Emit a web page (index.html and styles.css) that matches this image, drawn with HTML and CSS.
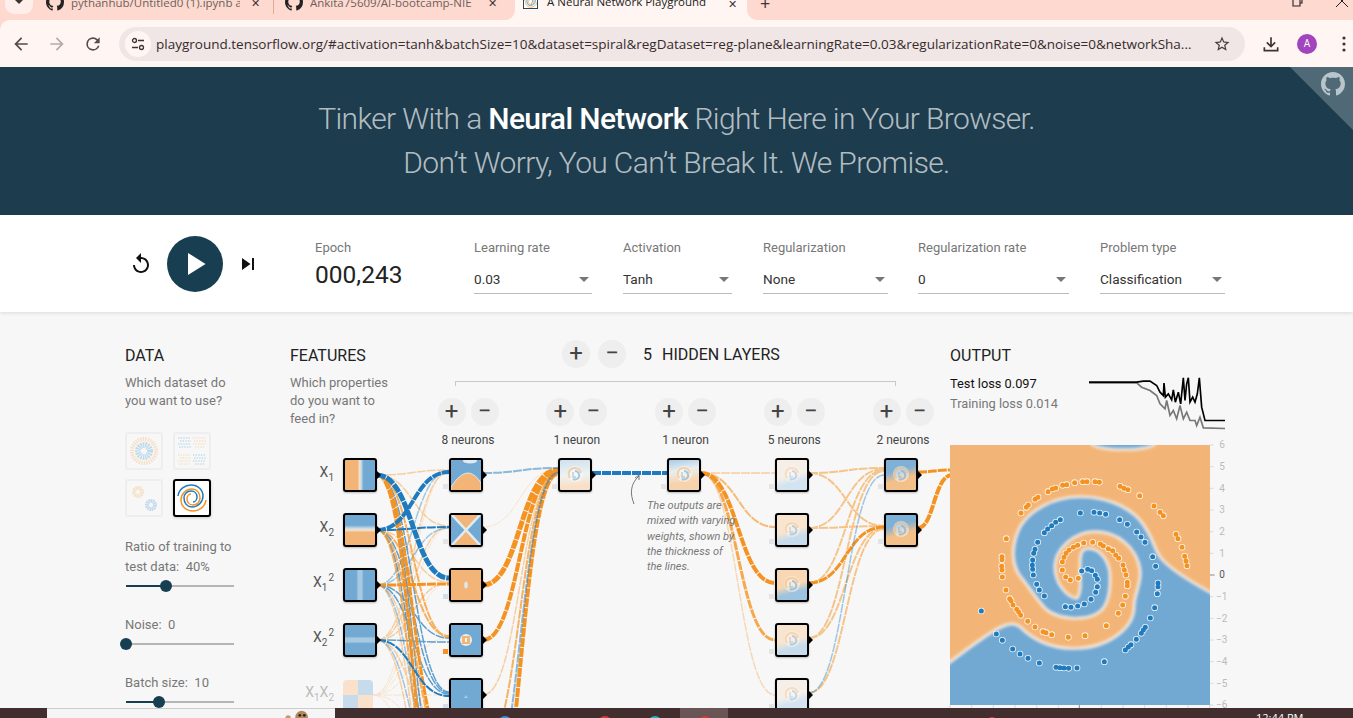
FILE: index.html
```html
<!DOCTYPE html>
<html lang="en">
<head>
<meta charset="utf-8">
<title>A Neural Network Playground</title>
<link rel="stylesheet" href="styles.css">
</head>
<body>
<svg class="defs" width="0" height="0" aria-hidden="true">
  <defs>
    <filter id="soft" x="-5%" y="-5%" width="110%" height="110%"><feGaussianBlur stdDeviation="4"/></filter>
    <symbol id="gh" viewBox="0 0 16 16"><path d="M8 0C3.58 0 0 3.58 0 8c0 3.54 2.29 6.53 5.47 7.59.4.07.55-.17.55-.38 0-.19-.01-.82-.01-1.49-2.01.37-2.53-.49-2.69-.94-.09-.23-.48-.94-.82-1.13-.28-.15-.68-.52-.01-.53.63-.01 1.08.58 1.23.82.72 1.21 1.87.87 2.33.66.07-.52.28-.87.51-1.07-1.78-.2-3.64-.89-3.64-3.95 0-.87.31-1.59.82-2.15-.08-.2-.36-1.02.08-2.12 0 0 .67-.21 2.2.82.64-.18 1.32-.27 2-.27s1.36.09 2 .27c1.53-1.04 2.2-.82 2.2-.82.44 1.1.16 1.92.08 2.12.51.56.82 1.27.82 2.15 0 3.07-1.87 3.75-3.65 3.95.29.25.54.73.54 1.48 0 1.07-.01 1.93-.01 2.2 0 .21.15.46.55.38A8.013 8.013 0 0016 8c0-4.42-3.58-8-8-8z"/></symbol>
    <symbol id="swirl" viewBox="0 0 30 30">
      <circle cx="15" cy="14" r="8" fill="#fff" opacity=".45"/>
      <path d="M10 18c-3-4-1-10 5-10 3 0 6 2 6 5" fill="none" stroke="#f3b577" stroke-width="2" opacity=".6"/>
      <path d="M15 11c3 0 5 3 4 6-1 2-4 3-6 2" fill="none" stroke="#72a9d2" stroke-width="2" opacity=".6"/>
      <path d="M13 12v5h3" fill="none" stroke="#72a9d2" stroke-width="1.4" opacity=".5"/>
    </symbol>
    <symbol id="spiral" viewBox="0 0 34 34">
      <path d="M31 19C30 26 24 30 18 30C11 30 6 25 6 19C6 13 11 8 17 8C22 8 25 12 25 17C25 21 22 24 18 24C14 24 12 21 12 18C12 15 14 13 16 13" fill="none" stroke="#f59322" stroke-width="1.5"/>
      <path d="M31 19C30 26 24 30 18 30C11 30 6 25 6 19C6 13 11 8 17 8C22 8 25 12 25 17C25 21 22 24 18 24C14 24 12 21 12 18C12 15 14 13 16 13" fill="none" stroke="#1f7bbf" stroke-width="1.5" transform="rotate(180 17 17)"/>
    </symbol>
    <symbol id="heat" viewBox="30 315 780 780">
      <rect x="30" y="315" width="780" height="780" fill="#f3b577"/>
      <g filter="url(#soft)">
        <ellipse cx="550" cy="310" rx="95" ry="19" fill="#72a9d2" stroke="#f8f2ea" stroke-width="7"/>
        <path fill="#72a9d2" stroke="#f8f2ea" stroke-width="7" d="M830 767C760 730 690 690 660 650C640 620 640 590 600 540C560 495 490 470 420 470C340 470 270 510 240 560C210 620 215 680 245 715C270 745 290 780 320 810C360 840 440 845 480 815C510 790 512 740 510 700C505 660 480 625 445 625C420 625 420 650 420 680C420 720 425 760 410 775C380 770 345 730 345 680C345 630 400 575 465 575C530 575 590 620 600 690C605 730 580 770 582 800C582 860 510 925 400 925C320 925 270 890 240 860C225 848 205 850 185 860C140 880 80 930 10 980L10 1115L830 1115Z"/>
      </g>
    </symbol>
    <path id="po" d="M243 519h0M259 502h0M265 495h0M285 478h0M294 472h0M324 455h0M337 447h0M347 444h0M368 436h0M380 434h0M404 428h0M428 425h0M441 425h0M465 425h0M478 427h0M540 439h0M552 445h0M564 449h0M599 467h0M642 498h0M660 517h0M670 527h0M708 583h0M714 596h0M726 622h0M734 649h0M738 663h0M741 677h0M199 596h0M186 650h0M186 659h0M185 679h0M186 690h0M187 711h0M198 750h0M209 776h0M213 782h0M219 795h0M230 808h0M236 816h0M242 826h0M263 844h0M285 861h0M309 875h0M318 878h0M335 884h0M385 892h0M435 887h0M499 857h0M535 820h0M548 795h0M556 769h0M562 737h0M562 727h0M558 705h0M553 690h0M549 675h0M536 655h0M527 645h0M518 632h0M505 626h0M490 618h0M481 612h0M458 607h0M431 609h0M413 616h0M400 622h0M387 630h0M378 640h0M372 652h0M367 666h0M367 690h0M377 711h0M391 720h0M415 715h0"/>
    <path id="pb" d="M421 519h0M462 517h0M479 519h0M497 523h0M539 539h0M562 553h0M590 576h0M603 591h0M615 607h0M638 650h0M647 679h0M654 729h0M654 740h0M652 761h0M644 803h0M631 834h0M616 862h0M610 870h0M604 880h0M589 898h0M573 914h0M565 921h0M556 930h0M493 965h0M411 984h0M386 985h0M372 984h0M360 983h0M348 982h0M298 969h0M264 955h0M240 942h0M218 927h0M187 901h0M169 882h0M124 813h0M361 539h0M347 547h0M335 557h0M323 567h0M313 578h0M293 607h0M285 628h0M281 640h0M278 660h0M277 675h0M278 688h0M280 705h0M290 733h0M298 750h0M313 768h0M425 693h0M443 688h0M455 692h0M466 706h0M472 718h0M472 740h0M467 757h0M453 778h0M433 792h0M413 798h0M393 802h0M376 800h0"/>
  </defs>
</svg>

<div class="tabstrip">
  <div class="tabs-left">
    <span class="tab-search"><svg class="chev" viewBox="0 0 10 6"><path d="M1 0l4 4 4-4z"/></svg></span>
    <div class="tab tab-a"><svg class="tab-ico"><use href="#gh"/></svg><span class="tab-title">pythanhub/Untitled0 (1).ipynb a</span><span class="tab-x">✕</span></div>
    <i class="tab-sep"></i>
    <div class="tab tab-b"><svg class="tab-ico"><use href="#gh"/></svg><span class="tab-title">Ankita75609/AI-bootcamp-NIE</span><span class="tab-x">✕</span></div>
  </div>
  <div class="tab tab-active"><svg class="tab-ico tab-fav" viewBox="0 0 16 16"><rect x=".5" y=".5" width="15" height="15" fill="#fff" stroke="#1d3c4d"/><use href="#spiral" width="16" height="16"/></svg><span class="tab-title">A Neural Network Playground</span><span class="tab-x">✕</span></div>
  <div class="tabs-right">
    <span class="newtab">+</span>
    <svg class="win win-max" viewBox="0 0 12 12"><path d="M2 3h7v8H2zM4 3V1h7v7H9" fill="none" stroke="#222" stroke-width="1.1"/></svg>
    <svg class="win win-close" viewBox="0 0 12 12"><path d="M0 0l12 12M12 0L0 12" stroke="#222" stroke-width="1"/></svg>
  </div>
</div>

<div class="toolbar">
  <svg class="tool" viewBox="0 0 24 24"><path d="M20 11H7.83l5.59-5.59L12 4l-8 8 8 8 1.41-1.41L7.83 13H20v-2z"/></svg>
  <svg class="tool tool-off" viewBox="0 0 24 24"><path d="M12 4l-1.41 1.41L16.17 11H4v2h12.17l-5.58 5.59L12 20l8-8z"/></svg>
  <svg class="tool" viewBox="0 0 24 24"><path d="M17.65 6.35A7.96 7.96 0 0 0 12 4a8 8 0 1 0 7.73 10h-2.08A6 6 0 1 1 12 6c1.66 0 3.14.69 4.22 1.78L13 11h7V4l-2.35 2.35z"/></svg>
  <div class="omnibox">
    <span class="chip"><svg viewBox="0 0 16 16"><g fill="none" stroke="#3f3434" stroke-width="1.3"><circle cx="4.5" cy="4.5" r="2"/><path d="M8 4.5h6M2 11.5h6"/><circle cx="11.5" cy="11.5" r="2"/></g></svg></span>
    <span class="url">playground.tensorflow.org/#activation=tanh&amp;batchSize=10&amp;dataset=spiral&amp;regDataset=reg-plane&amp;learningRate=0.03&amp;regularizationRate=0&amp;noise=0&amp;networkSha...</span>
    <svg class="star" viewBox="0 0 24 24"><path d="M22 9.24l-7.19-.62L12 2 9.19 8.63 2 9.24l5.46 4.73L5.82 21 12 17.27 18.18 21l-1.63-7.03L22 9.24zM12 15.4l-3.76 2.27 1-4.28-3.32-2.88 4.38-.38L12 6.1l1.71 4.04 4.38.38-3.32 2.88 1 4.28L12 15.4z"/></svg>
  </div>
  <svg class="dl" viewBox="0 0 24 24"><path d="M12 4v11M7 10l5 5 5-5M4 16v4h16v-4" fill="none" stroke="#3f3434" stroke-width="2"/></svg>
  <span class="avatar">A</span>
  <svg class="dots" viewBox="0 0 4 16"><circle cx="2" cy="2" r="1.6"/><circle cx="2" cy="8" r="1.6"/><circle cx="2" cy="14" r="1.6"/></svg>
</div>

<header class="hero">
  <h1>Tinker With a <b>Neural Network</b> Right Here in Your Browser.<br>Don’t Worry, You Can’t Break It. We Promise.</h1>
  <svg class="corner" viewBox="0 0 63 63"><path d="M0 0h63v63z" fill="#4f6a76"/><use href="#gh" x="31" y="5" width="24" height="24" fill="#b9c5ca"/></svg>
</header>

<section class="controls">
  <svg class="reset" viewBox="0 0 24 24"><path d="M12 5V1L7 6l5 5V7c3.31 0 6 2.69 6 6s-2.69 6-6 6-6-2.69-6-6H4c0 4.42 3.58 8 8 8s8-3.58 8-8-3.58-8-8-8z"/></svg>
  <span class="play"><svg viewBox="0 0 24 24"><path d="M6 2.5v19L21 12z"/></svg></span>
  <svg class="step" viewBox="0 0 24 24"><path d="M6 18l8.5-6L6 6v12zM16 6v12h2V6h-2z"/></svg>
  <div class="epoch"><div class="ctl-label">Epoch</div><div class="epoch-value">000,243</div></div>
  <div class="select s-lr"><div class="ctl-label">Learning rate</div><div class="select-box">0.03<i class="caret"></i></div></div>
  <div class="select s-act"><div class="ctl-label">Activation</div><div class="select-box">Tanh<i class="caret"></i></div></div>
  <div class="select s-reg"><div class="ctl-label">Regularization</div><div class="select-box">None<i class="caret"></i></div></div>
  <div class="select s-rate"><div class="ctl-label">Regularization rate</div><div class="select-box">0<i class="caret"></i></div></div>
  <div class="select s-type"><div class="ctl-label">Problem type</div><div class="select-box">Classification<i class="caret"></i></div></div>
</section>

<main class="main">
  <svg class="links" viewBox="0 312 1353 396" aria-hidden="true">
    <!-- X1X2 to first layer -->
    <g class="lnk o a2 w1">
      <path d="M373 695C411 695 411 472 449 472"/><path d="M373 695C411 695 411 528 449 528"/><path d="M373 695C411 695 411 583 449 583"/><path d="M373 695C411 695 411 638 449 638"/><path d="M373 695C411 695 411 695 449 695"/><path d="M373 695C411 695 411 750 449 750"/><path d="M373 695C411 695 411 860 449 860"/>
    </g>
    <!-- pale links -->
    <g class="lnk o a4 w15">
      <path d="M377 475C413 475 413 470 449 470"/><path d="M377 475C413 475 413 526 449 526"/><path d="M377 530C413 530 413 582 449 582"/><path d="M377 585C413 585 413 750 449 750"/><path d="M377 585C413 585 413 860 449 860"/><path d="M377 640C413 640 413 472 449 472"/><path d="M377 640C413 640 413 527 449 527"/><path d="M377 640C413 640 413 583 449 583"/><path d="M377 640C413 640 413 750 449 750"/><path d="M377 640C413 640 413 860 449 860"/>
    </g>
    <g class="lnk b a4 w15">
      <path d="M377 585C413 585 413 471 449 471"/><path d="M377 585C413 585 413 528 449 528"/><path d="M377 530C413 530 413 472 449 472"/><path d="M377 640C413 640 413 805 449 805"/><path d="M377 585C413 585 413 805 449 805"/>
    </g>
    <g class="lnk b a7 w15">
      <path d="M377 475C413 475 413 692 449 692"/><path d="M377 475C413 475 413 805 449 805"/><path d="M377 530C413 530 413 693 449 693"/><path d="M377 530C413 530 413 805 449 805"/><path d="M377 585C413 585 413 638 449 638"/><path d="M377 585C413 585 413 694 449 694"/><path d="M377 640C413 640 413 642 449 642"/>
    </g>
    <g class="lnk o a7 w2">
      <path d="M377 475C413 475 413 637 449 637"/><path d="M377 530C413 530 413 636 449 636"/><path d="M377 530C413 530 413 750 449 750"/><path d="M377 530C413 530 413 860 449 860"/>
    </g>
    <g class="lnk o w3">
      <path d="M377 475C413 475 413 750 449 750"/><path d="M377 475C413 475 413 860 449 860"/><path d="M377 585C413 585 413 584 449 584"/>
    </g>
    <g class="lnk b w2">
      <path d="M377 530C413 530 413 527 449 527"/><path d="M377 640C413 640 413 696 449 696"/>
    </g>
    <path class="lnk b w4" d="M377 530C413 530 413 472 449 472"/>
    <path class="lnk b w5" d="M377 475C413 475 413 578 449 578"/>
    <!-- first to second layer -->
    <g class="lnk o">
      <path class="w2 a7" d="M483 750C520 750 520 472 558 472"/>
      <path class="w15 a4" d="M483 695C520 695 520 473 558 473"/>
      <path class="w4" d="M483 640C520 640 520 471 558 471"/>
      <path class="w5" d="M483 585C520 585 520 470 558 470"/>
      <path class="w4" d="M483 860C520 860 520 474 558 474"/>
    </g>
    <path class="lnk o w1 a2" d="M483 527C520 527 520 469 558 469"/>
    <path class="lnk b w2 a5" d="M483 473C520 473 520 468 558 468"/>
    <path class="lnk b w2 a5" d="M483 805C520 805 520 473 558 473"/>
    <!-- second to third -->
    <path class="lnk b w4" d="M592 473H667"/>
    <!-- third to fourth -->
    <g class="lnk o">
      <path class="w15 a3" d="M701 473C738 473 738 695 775 695"/>
      <path class="w2 a3" d="M701 473H775"/>
      <path class="w2 a6" d="M701 473C738 473 738 527 775 527"/>
      <path class="w3 a8" d="M701 473C738 473 738 640 775 640"/>
      <path class="w4" d="M701 473C738 473 738 583 775 583"/>
    </g>
    <!-- fourth to fifth -->
    <g class="lnk o w2 a5">
      <path d="M809 473C846 473 846 468 884 468"/><path d="M809 473C846 473 846 526 884 526"/><path d="M809 528C846 528 846 469 884 469"/><path d="M809 528C846 528 846 526 884 526"/><path d="M809 583C846 583 846 470 884 470"/><path d="M809 638C846 638 846 471 884 471"/><path d="M809 638C846 638 846 528 884 528"/><path d="M809 693C846 693 846 529 884 529"/>
    </g>
    <path class="lnk o w3" d="M809 583C846 583 846 527 884 527"/>
    <path class="lnk b w15 a4" d="M809 693C846 693 846 475 884 475"/>
    <!-- fifth to output -->
    <path class="lnk o w3" d="M918 472C934 472 934 470 952 470"/>
    <path class="lnk o w4" d="M918 528C934 528 934 475 952 475"/>
    <path class="arrow" d="M634 504C630 494 630 484 639 476M635 478l4-3 0 5"/>
  </svg>

  <section class="col-data">
    <h2>DATA</h2>
    <p class="hint">Which dataset do<br>you want to use?</p>
    <div class="datasets">
      <span class="ds ds-off"><svg viewBox="0 0 34 34"><circle cx="17" cy="17" r="12" fill="none" stroke="#f59322" stroke-width="4" stroke-dasharray="1.5 1"/><circle cx="17" cy="17" r="6" fill="none" stroke="#0877bd" stroke-width="6" stroke-dasharray="1.5 .7"/></svg></span>
      <span class="ds ds-off"><svg viewBox="0 0 34 34"><g fill="none" stroke-width="1.4" stroke-dasharray="1.4 1.2"><path stroke="#0877bd" d="M3 4h13M5 7h11M3 10h12M4 13h12M18 21h13M19 24h12M18 27h13M20 30h10"/><path stroke="#f59322" d="M18 4h13M19 7h12M18 10h13M20 13h10M3 21h13M5 24h11M3 27h12M4 30h11"/></g></svg></span>
      <span class="ds ds-off"><svg viewBox="0 0 34 34"><circle cx="11" cy="11" r="4" fill="none" stroke="#f59322" stroke-width="4" stroke-dasharray="1.5 .5"/><circle cx="24" cy="24" r="4" fill="none" stroke="#0877bd" stroke-width="4" stroke-dasharray="1.5 .5"/></svg></span>
      <span class="ds ds-on"><svg viewBox="0 0 34 34"><use href="#spiral"/></svg></span>
    </div>
    <div class="field">Ratio of training to<br>test data:&nbsp; 40%</div>
    <div class="slider"><i class="fill" style="width:40px"></i><i class="thumb"></i><i class="rest"></i></div>
    <div class="field">Noise:&nbsp; 0</div>
    <div class="slider"><i class="fill" style="width:0"></i><i class="thumb"></i><i class="rest"></i></div>
    <div class="field">Batch size:&nbsp; 10</div>
    <div class="slider"><i class="fill" style="width:33px"></i><i class="thumb"></i><i class="rest"></i></div>
  </section>

  <section class="col-net">
    <div class="col-features">
      <h2>FEATURES</h2>
      <p class="hint">Which properties<br>do you want to<br>feed in?</p>
      <div class="features">
        <div class="feature"><span class="flabel">X<sub>1</sub></span><div class="tile t-x1"></div></div>
        <div class="feature"><span class="flabel">X<sub>2</sub></span><div class="tile t-x2"></div></div>
        <div class="feature"><span class="flabel">X<sub>1</sub><sup>2</sup></span><div class="tile t-x1s"></div></div>
        <div class="feature"><span class="flabel">X<sub>2</sub><sup>2</sup></span><div class="tile t-x2s"></div></div>
        <div class="feature feature-off"><span class="flabel">X<sub>1</sub>X<sub>2</sub></span><div class="tile t-xx"></div></div>
      </div>
    </div>
    <div class="col-layers">
      <div class="hidden-head">
        <span class="round">+</span><span class="round">−</span>
        <span class="hidden-title"><b>5</b>HIDDEN LAYERS</span>
      </div>
      <div class="bracket"></div>
      <div class="layers">
        <div class="layer">
          <div class="layer-btns"><span class="round">+</span><span class="round">−</span></div>
          <div class="layer-label">8 neurons</div>
          <div class="tile neuron"><svg viewBox="0 0 30 30"><rect width="30" height="30" fill="#72a9d2"/><ellipse cx="19" cy="1" rx="7" ry="2.5" fill="#dfeaf3"/><path d="M0 27C6 18 11 13 18 13C23 14 27 18 30 23V31H0Z" fill="#f3b577" stroke="#dde8f0" stroke-width="1"/></svg></div>
          <div class="tile neuron"><svg viewBox="0 0 30 30"><rect width="30" height="30" fill="#72a9d2"/><path d="M1 0h28L15 15zM1 30h28L15 15z" fill="#f3b577"/><path d="M1 0l28 30M29 0L1 30" stroke="#e3ebf0" stroke-width="2.5"/></svg></div>
          <div class="tile neuron w-blue"><svg viewBox="0 0 30 30"><rect width="30" height="30" fill="#f3b577"/><ellipse cx="15" cy="15" rx="1.8" ry="3.5" fill="#dfe6e8"/></svg></div>
          <div class="tile neuron w-orange"><svg viewBox="0 0 30 30"><rect width="30" height="30" fill="#72a9d2"/><circle cx="15" cy="15" r="6" fill="#e8eef2"/><rect x="11" y="11" width="8" height="8" fill="#f3b577"/><rect x="14" y="13" width="2" height="4" fill="#fdf4ea"/></svg></div>
          <div class="tile neuron w-blue"><svg viewBox="0 0 30 30"><rect width="30" height="30" fill="#72a9d2"/><path d="M13 18l2-3 2 3z" fill="#a8c9e2"/></svg></div>
        </div>
        <div class="layer">
          <div class="layer-btns"><span class="round">+</span><span class="round">−</span></div>
          <div class="layer-label">1 neuron</div>
          <div class="tile neuron t-mix"><svg viewBox="0 0 30 30"><use href="#swirl"/></svg></div>
        </div>
        <div class="layer">
          <div class="layer-btns"><span class="round">+</span><span class="round">−</span></div>
          <div class="layer-label">1 neuron</div>
          <div class="tile neuron t-mix2"><svg viewBox="0 0 30 30"><use href="#swirl"/></svg></div>
        </div>
        <div class="layer">
          <div class="layer-btns"><span class="round">+</span><span class="round">−</span></div>
          <div class="layer-label">5 neurons</div>
          <div class="tile neuron t-pale"><svg viewBox="0 0 30 30"><use href="#swirl"/></svg></div>
          <div class="tile neuron t-soft"><svg viewBox="0 0 30 30"><use href="#swirl"/></svg></div>
          <div class="tile neuron t-warm"><svg viewBox="0 0 30 30"><use href="#swirl"/></svg></div>
          <div class="tile neuron t-soft"><svg viewBox="0 0 30 30"><use href="#swirl"/></svg></div>
          <div class="tile neuron t-pale"><svg viewBox="0 0 30 30"><use href="#swirl"/></svg></div>
        </div>
        <div class="layer">
          <div class="layer-btns"><span class="round">+</span><span class="round">−</span></div>
          <div class="layer-label">2 neurons</div>
          <div class="tile neuron t-strong"><svg viewBox="0 0 30 30"><use href="#swirl"/></svg></div>
          <div class="tile neuron t-strong"><svg viewBox="0 0 30 30"><use href="#swirl"/></svg></div>
        </div>
      </div>
    </div>
    <p class="note">The outputs are<br>mixed with varying<br>weights, shown by<br>the thickness of<br>the lines.</p>
  </section>

  <section class="col-output">
    <h2>OUTPUT</h2>
    <div class="loss-row">
      <div class="loss"><div class="loss-test">Test loss 0.097</div><div class="loss-train">Training loss 0.014</div></div>
      <svg class="spark" viewBox="447 110 408 158">
        <path class="spark-g" d="M447 127L590 127L605 140L630 150L650 165L660 190L675 205L680 180L690 225L700 210L710 235L720 195L730 235L740 215L750 240L765 240L770 255L780 230L790 262L855 264"/>
        <path class="spark-k" d="M447 125L590 125L610 122L630 122L650 135L660 155L670 165L672 128L676 170L685 160L695 178L700 148L706 185L715 155L722 190L730 112L735 180L740 130L745 112L750 185L758 170L765 185L772 160L778 112L785 200L795 240L855 240"/>
      </svg>
    </div>
    <svg class="plot" viewBox="30 315 840 810">
      <use href="#heat" x="30" y="315" width="780" height="780"/>
      <use href="#po" class="ring"/><use href="#po" class="pt-o"/>
      <use href="#pb" class="ring"/><use href="#pb" class="pt-b"/>
      <path class="ticks" d="M810 315h10M810 380h10M810 445h10M810 510h10M810 575h10M810 640h10M810 770h10M810 835h10M810 900h10M810 965h10M810 1030h10M810 1095h10M30 1095v10M95 1095v10M160 1095v10M225 1095v10M290 1095v10M355 1095v10M484 1095v10M549 1095v10M614 1095v10M679 1095v10M744 1095v10M809 1095v10"/>
      <path class="ticks-0" d="M810 705h14M418 1095v14"/>
      <g class="axis">
        <text x="838" y="325">6</text><text x="838" y="390">5</text><text x="838" y="455">4</text><text x="838" y="519">3</text><text x="838" y="584">2</text><text x="838" y="650">1</text><text class="zero" x="838" y="714">0</text><text x="828" y="779">−1</text><text x="828" y="845">−2</text><text x="828" y="909">−3</text><text x="828" y="974">−4</text><text x="828" y="1040">−5</text><text x="828" y="1105">−6</text>
      </g>
    </svg>
  </section>
</main>

<footer class="taskbar">
  <div class="task-app"><svg class="critter" viewBox="0 0 34 10"><circle cx="21" cy="9" r="7" fill="#b08a5a"/><circle cx="19" cy="7" r="1.5" fill="#2b211b"/><circle cx="24" cy="7" r="1.5" fill="#2b211b"/><circle cx="6" cy="10" r="3" fill="#c79a62"/></svg></div>
  <div class="task-icons">
    <i class="ti ti-blue"></i><i class="ti ti-red"></i><i class="ti ti-teal"></i>
    <span class="ti-active"><i class="ti ti-red"></i></span>
    <i class="ti ti-small"></i>
  </div>
  <span class="clock">12:44 PM</span>
</footer>
</body>
</html>
```

FILE: styles.css
```css
* { box-sizing: border-box; }
html, body { margin: 0; padding: 0; }
body {
  width: 1353px;
  height: 718px;
  overflow: hidden;
  display: flex;
  flex-direction: column;
  background: #fdd9cf;
  font-family: Roboto, "Liberation Sans", sans-serif;
  color: #333;
}
.defs { position: absolute; }

/* browser chrome */
.tabstrip { height: 20px; flex: none; display: flex; background: #fff6f3; font: 11.5px "Open Sans", Roboto, sans-serif; color: #3f3434; }
.tabs-left { width: 515px; height: 20px; background: #fdd9cf; border-bottom-right-radius: 10px; display: flex; align-items: flex-end; position: relative; }
.tabs-right { flex: 1; height: 20px; background: #fdd9cf; border-bottom-left-radius: 10px; display: flex; align-items: flex-start; position: relative; }
.tab-search { width: 28px; height: 14px; margin: 0 0 6px 5px; background: #ffeee9; border-radius: 0 0 9px 9px; display: flex; justify-content: center; flex: none; }
.chev { width: 10px; height: 6px; fill: #3f3434; }
.tab { height: 28px; padding-bottom: 8px; display: flex; align-items: center; flex: none; white-space: nowrap; }
.tab-a { width: 227px; margin-left: 13px; }
.tab-b { width: 225px; margin-left: 11px; }
.tab-sep { width: 1px; height: 14px; background: #e9a798; margin: 0 0 6px 0; flex: none; }
.tab-ico { width: 18px; height: 18px; flex: none; fill: #222; margin-right: 7px; }
.tab-fav { width: 15px; height: 15px; margin-right: 9px; }
.tab-title { flex: 1; overflow: hidden; }
.tab-a .tab-title, .tab-b .tab-title { color: #6f5f5c; }
.tab-x { font-size: 11px; width: 14px; text-align: center; color: #3f3434; margin: 0 11px 0 8px; }
.tab-active { width: 232px; height: 20px; padding: 0 0 0 8px; align-items: flex-start; overflow: hidden; }
.tab-active .tab-ico { margin-top: -6px; }
.tab-active .tab-title { margin-top: -7px; line-height: 18px; color: #222; }
.tab-active .tab-x { margin: -4px 8px 0 0; }
.newtab { font-size: 18px; line-height: 10px; margin: -2px 0 0 13px; color: #3f3434; }
.win { position: absolute; width: 12px; height: 12px; top: -5px; }
.win-max { left: 544px; }
.win-close { left: 589px; }

.toolbar { height: 47px; flex: none; background: #fff6f3; border-top-left-radius: 10px; display: flex; align-items: center; padding: 0 5px 0 0; }
.tool { width: 20px; height: 20px; fill: #5a4a48; margin-left: 16px; flex: none; }
.tool:first-child { margin-left: 11px; }
.tool-off { fill: #b5aaa8; }
.omnibox { width: 1126px; height: 34px; margin-left: 16px; background: #f0e6e6; border-radius: 17px; display: flex; align-items: center; flex: none; }
.chip { width: 26px; height: 26px; border-radius: 50%; background: #fff6f3; margin-left: 6px; display: flex; align-items: center; justify-content: center; flex: none; }
.chip svg { width: 16px; height: 16px; }
.url { margin-left: 5px; width: 1037px; white-space: nowrap; overflow: hidden; font: 13.5px "Open Sans", sans-serif; color: #372b2b; flex: none; }
.star { width: 18px; height: 18px; fill: #4a3a38; margin-left: 20px; flex: none; }
.dl { width: 20px; height: 20px; margin-left: 16px; flex: none; }
.avatar { width: 20px; height: 20px; border-radius: 50%; background: #a244bd; color: #fff; font: 10px/20px Roboto, sans-serif; text-align: center; margin-left: 16px; flex: none; }
.dots { width: 4px; height: 16px; fill: #3f3434; margin-left: 25px; flex: none; }

/* hero */
.hero { height: 148px; flex: none; background: #1d3c4d; position: relative; padding-top: 30px; }
.hero h1 { margin: 0; font-weight: 300; font-size: 30px; letter-spacing: -.63px; line-height: 44px; text-align: center; color: rgba(255, 255, 255, .68); }
.hero b { font-weight: 500; color: #fff; }
.corner { position: absolute; right: 0; top: 0; width: 63px; height: 63px; }

/* controls */
.controls { height: 97px; flex: none; background: #fff; display: flex; align-items: flex-start; padding: 25px 0 0 129px; box-shadow: 0 1px 4px rgba(0, 0, 0, .12); position: relative; z-index: 2; }
.reset { width: 24px; height: 24px; margin-top: 12px; flex: none; fill: #111; }
.play { width: 56px; height: 56px; border-radius: 50%; background: #183f51; margin: -4px 0 0 14px; display: flex; align-items: center; justify-content: center; flex: none; }
.play svg { width: 28px; height: 28px; fill: #fff; }
.step { width: 24px; height: 24px; margin: 12px 0 0 13px; flex: none; fill: #111; }
.epoch { width: 159px; margin-left: 55px; flex: none; }
.ctl-label { font-size: 13px; line-height: 16px; color: #777; white-space: nowrap; }
.epoch-value { font-size: 24.5px; line-height: 38px; color: #222; }
.select { flex: none; }
.select-box { height: 38px; border-bottom: 1px solid #bbb; font-size: 13.6px; line-height: 46px; color: #333; position: relative; }
.caret { position: absolute; right: 3px; top: 21px; border: 5px solid transparent; border-top-color: #777; border-bottom: 0; }
.s-lr { width: 118px; }
.s-act { width: 109px; margin-left: 31px; }
.s-reg { width: 125px; margin-left: 31px; }
.s-rate { width: 151px; margin-left: 30px; }
.s-type { width: 125px; margin-left: 31px; }

/* main */
.main { height: 396px; flex: none; background: #f7f7f7; display: grid; grid-template-columns: 165px 660px 275px; padding: 29px 0 0 125px; position: relative; overflow: hidden; }
.main h2 { margin: 0; font-size: 16px; font-weight: 400; line-height: 30px; color: #222; }
.hint { margin: 3px 0 0; font-size: 13px; line-height: 18px; color: #777; }
.links { position: absolute; left: 0; top: 0; width: 1353px; height: 396px; pointer-events: none; }
.lnk, .lnk path { fill: none; stroke-dasharray: 9 1; }
.o { stroke: #f59322; }
.b { stroke: #1f7bbf; }
.w1 { stroke-width: 1; }
.w15 { stroke-width: 1.5; }
.w2 { stroke-width: 2; }
.w3 { stroke-width: 3; }
.w4 { stroke-width: 4; }
.w5 { stroke-width: 5; }
.a2 { opacity: .2; }
.a3 { opacity: .3; }
.a4 { opacity: .4; }
.a5 { opacity: .5; }
.a6 { opacity: .6; }
.a7 { opacity: .7; }
.a8 { opacity: .8; }
.arrow { fill: none; stroke: #777; stroke-width: 1; }

/* data column */
.col-data { position: relative; }
.datasets { display: grid; grid-template-columns: 38px 38px; gap: 9px 10px; margin-top: 22px; }
.ds { width: 38px; height: 38px; border-radius: 3px; padding: 0; display: block; }
.ds svg { width: 100%; height: 100%; display: block; }
.ds-off { border: 2px solid #eee; }
.ds-off svg { opacity: .22; }
.ds-on { border: 2px solid #000; background: #fff; box-shadow: 0 1px 3px rgba(0, 0, 0, .2); }
.field { margin-top: 23px; font-size: 13px; line-height: 20px; color: #777; }
.datasets + .field { margin-top: 20px; }
.slider { display: flex; align-items: center; width: 108px; height: 12px; margin: 3px 0 0 1px; }
.fill { height: 2px; background: #183f51; flex: none; }
.thumb { width: 12px; height: 12px; border-radius: 50%; background: #183f51; margin: 0 -6px; flex: none; position: relative; }
.rest { flex: 1; height: 2px; background: #b5b5b5; }

/* network */
.col-net { display: flex; position: relative; }
.col-features { width: 128px; flex: none; }
.features { margin-top: 30px; display: flex; flex-direction: column; gap: 21px; }
.feature { display: flex; align-items: center; height: 34px; position: relative; }
.flabel { width: 44px; margin-right: 9px; padding-bottom: 6px; text-align: right; font-size: 14px; color: #555; white-space: nowrap; position: relative; flex: none; }
.flabel sub { font-size: 10px; vertical-align: -4px; line-height: 0; }
.flabel sup { font-size: 10px; vertical-align: 6px; line-height: 0; margin-left: 1px; }
.feature-off .flabel { color: #bbb; }
.tile { width: 34px; height: 34px; border: 2px solid #000; border-radius: 3px; background: #72a9d2; position: relative; flex: none; box-shadow: 0 1px 2px rgba(0, 0, 0, .25); }
.tile::after { content: ""; position: absolute; left: 30px; top: 9px; border: 6px solid transparent; border-left-color: #000; border-right: 0; }
.tile svg { display: block; width: 100%; height: 100%; }
.t-x1 { background: linear-gradient(90deg, #f3b577 0 42%, #f5e3d0 49%, #c4d9ea 54%, #72a9d2 62%); }
.t-x2 { background: linear-gradient(180deg, #72a9d2 0 34%, #c4d9ea 44%, #f5e3d0 50%, #f3b577 58%); }
.t-x1s { background: linear-gradient(90deg, #72a9d2 0 38%, #a8c9e2 44% 56%, #72a9d2 62%); }
.t-x2s { background: linear-gradient(180deg, #72a9d2 0 38%, #a8c9e2 44% 56%, #72a9d2 62%); }
.t-xx { width: 30px; height: 30px; border: 0; border-radius: 4px; box-shadow: none; background: conic-gradient(#c6dcec 0 25%, #f9e1cc 0 50%, #c6dcec 0 75%, #f9e1cc 0); }
.t-xx::after { display: none; }
.neuron::before { content: ""; position: absolute; left: -8px; bottom: 1px; width: 5px; height: 5px; background: #e4e4e4; }
.w-blue::before { background: #d3dee8; }
.w-orange::before { background: #f59322; }
.t-mix { background: linear-gradient(175deg, #cfe2ef 0, #eef2f3 50%, #f9dfc6 85%); }
.t-mix2 { background: linear-gradient(170deg, #a9cbe4 0, #e8eef0 35%, #f7d3ad 70%); }
.t-pale { background: linear-gradient(165deg, #f6efe8 0 50%, #d3e3f0 72%); }
.t-pale svg { opacity: .6; }
.t-soft { background: linear-gradient(165deg, #f8e5d0 0 50%, #c6dcec 72%); }
.t-soft svg { opacity: .75; }
.t-warm { background: linear-gradient(165deg, #f7d7b4 0 50%, #9cc3e0 72%); }
.t-strong { background: linear-gradient(165deg, #7fb0d5 0 35%, #f3c08a 62%); }
.col-layers { flex: none; }
.round { width: 28px; height: 28px; border-radius: 50%; background: #eee; font-size: 24px; line-height: 26px; text-align: center; color: #444; flex: none; font-weight: 400; }
.hidden-head { display: flex; gap: 8px; height: 28px; padding-left: 144px; align-items: center; margin-top: -1px; }
.hidden-title { font-size: 16px; color: #222; margin-left: 9px; white-space: nowrap; }
.hidden-title b { font-weight: 400; margin-right: 10px; }
.bracket { width: 441px; height: 5px; margin: 13px 0 0 37px; border: 1px solid #c8c8c8; border-bottom: 0; }
.layers { display: flex; gap: 8.75px; margin-top: 12px; }
.layer { width: 100px; display: flex; flex-direction: column; gap: 21px; }
.layer-btns { display: flex; justify-content: center; gap: 5px; height: 28px; margin-bottom: -15px; }
.layer-label { font-size: 12px; line-height: 16px; text-align: center; color: #444; margin-bottom: -11px; }
.layer .tile { margin-left: 31px; }
.note { position: absolute; left: 357px; top: 157px; margin: 0; font-size: 11px; font-style: italic; line-height: 15.3px; color: #777; white-space: nowrap; }

/* output */
.col-output { position: relative; }
.loss-row { display: flex; align-items: flex-start; height: 71px; margin-top: 3px; }
.loss { font-size: 12.8px; line-height: 20px; }
.loss-test { color: #111; }
.loss-train { color: #777; }
.spark { width: 136px; height: 53px; margin: 3px 0 0 auto; fill: none; display: block; }
.spark-k { stroke: #000; stroke-width: 5; fill: none; }
.spark-g { stroke: #777; stroke-width: 5; fill: none; }
.plot { width: 280px; height: 270px; display: block; overflow: visible; }
.ring, .pt-o, .pt-b { fill: none; stroke-linecap: round; }
.ring { stroke: #fff; stroke-width: 20; opacity: .85; }
.pt-o { stroke: #f59322; stroke-width: 15; }
.pt-b { stroke: #1f7bbf; stroke-width: 15; }
.ticks { stroke: #ccc; stroke-width: 2; fill: none; }
.ticks-0 { stroke: #555; stroke-width: 2; fill: none; }
.axis text { font: 30px Roboto, sans-serif; fill: #bbb; }
.axis .zero { fill: #555; }

/* taskbar */
.taskbar { height: 10px; flex: none; background: #422d2f; display: flex; position: relative; z-index: 3; overflow: hidden; }
.task-app { width: 288px; margin-left: 47px; height: 10px; background: #f5f5f5; border-top: 1px solid #ccc; display: flex; justify-content: flex-end; padding-right: 20px; flex: none; }
.critter { width: 34px; height: 9px; }
.task-icons { display: flex; width: 700px; padding-left: 163px; flex: none; position: relative; }
.ti { width: 14px; height: 14px; border-radius: 50%; display: block; margin-top: 8px; flex: none; }
.ti-blue { background: #3b8ed0; margin-right: 86px; }
.ti-red { background: #d93a34; margin-right: 36px; }
.ti-teal { background: #16b6c4; margin-right: 18px; }
.ti-active { width: 48px; height: 10px; background: #6a5556; padding-left: 18px; display: block; margin-right: 260px; flex: none; }
.ti-small { background: #d93a34; width: 8px; height: 8px; margin-top: 9px; }
.clock { position: absolute; left: 1256px; top: 3px; font: 11px/14px "Open Sans", sans-serif; color: #fff; }
```
